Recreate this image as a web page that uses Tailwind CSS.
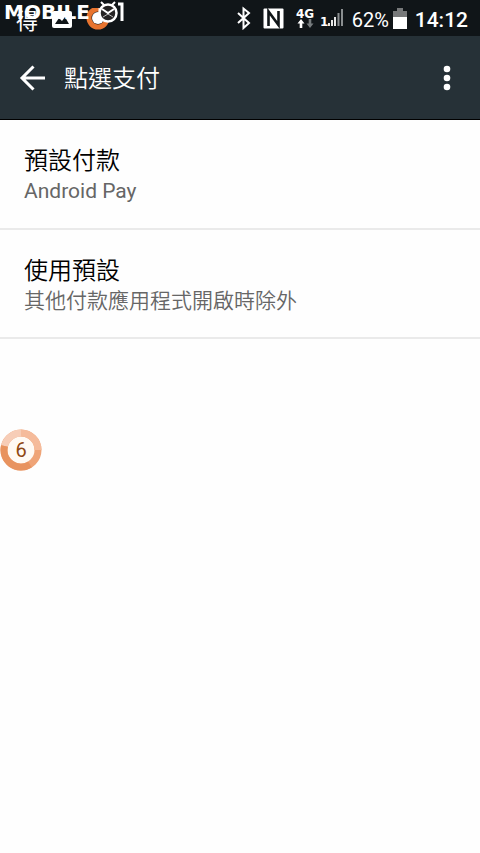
<!DOCTYPE html>
<html lang="zh-Hant">
<head>
<meta charset="utf-8">
<meta name="viewport" content="width=device-width, initial-scale=1">
<title>點選支付</title>
<script src="https://cdn.jsdelivr.net/npm/@tailwindcss/browser@4"></script>
</head>
<body class="relative min-h-screen bg-[#fefefe] font-[Roboto,'Noto_Sans_CJK_TC',sans-serif]">
<div class="relative flex h-9 items-center justify-between bg-[#101518] pr-3 pl-4 text-white">
  <div class="flex items-center gap-3.5 pt-1">
    <span class="pt-1 text-[22px] leading-6">得</span>
    <svg class="h-5 w-5" viewBox="0 0 20 20" aria-hidden="true"><rect y="1" width="20" height="17" rx="2" fill="#fff"/><path d="M3 14l4-6 3 3 3-4 4 7z" fill="#101518"/></svg>
    <svg class="h-6 w-6" viewBox="0 0 24 24" aria-hidden="true"><circle cx="12" cy="10" r="9" fill="none" stroke="#e8742f" stroke-width="5"/><path d="M12 1a9 9 0 0 1 9 9" fill="none" stroke="#f2b08c" stroke-width="5"/><circle cx="12" cy="10" r="6" fill="#fff"/></svg>
  </div>
  <div class="flex items-center">
    <svg class="h-6 w-[110px] shrink-0" viewBox="233 7 110 24" aria-hidden="true">
      <path d="M237 14l11 10-5.500 5V9.500l5.500 4.500-11 10" fill="none" stroke="#fff" stroke-width="2"/>
      <rect x="262.500" y="9.500" width="20" height="20" rx="1" fill="#fff"/>
      <path d="M267.500 27V12.500L277.500 26V12" fill="none" stroke="#101518" stroke-width="2.600"/>
      <text x="295" y="19" font-family="DejaVu Sans" font-size="12" font-weight="700" fill="#fff">4G</text>
      <path d="M300 20l3.500 4.500h-2.200V29h-2.600v-4.500h-2.200z" fill="#fff"/>
      <path d="M309 29l-3.500-4.500h2.200V20h2.600v4.500h2.200z" fill="#777c7e"/>
      <text x="319" y="27" font-family="DejaVu Sans" font-size="12" font-weight="700" fill="#fff">1</text>
      <path d="M328 27v-3M331 27v-6M334 27v-9" stroke="#e8e8e8" stroke-width="2"/>
      <path d="M337.500 27V14M341 27V10" stroke="#8a8e90" stroke-width="2"/>
    </svg>
    <span class="w-[49px] pt-1 pl-2 text-xl leading-6">62%</span>
    <svg class="h-6 w-3.5 shrink-0" viewBox="0 0 14 24" aria-hidden="true"><path d="M4 2h6v3h4v7H0V5h4z" fill="#77797a"/><path d="M0 11h14v12H0z" fill="#fff"/></svg>
    <span class="pt-1 pl-2 text-[21px] leading-6 font-medium">14:12</span>
  </div>
  <div class="absolute top-0 left-1 flex items-center text-white" aria-label="Mobile01">
    <span class="w-[94px] font-['DejaVu_Sans',sans-serif] text-xl leading-6 font-bold">MOBILE</span>
    <svg class="h-6 w-5" viewBox="0 0 20 24" aria-hidden="true"><path d="M3 2l3 3M17 2l-3 3" stroke="#fff" stroke-width="2"/><circle cx="10" cy="13" r="8.500" fill="#242323" stroke="#fff" stroke-width="2.500"/><path d="M4 9l6 4 6-4M10 13v1" fill="none" stroke="#fff" stroke-width="2"/><path d="M5 17l5-3 5 3" fill="none" stroke="#bbb" stroke-width="1"/></svg>
    <svg class="h-6 w-1.5" viewBox="0 0 6 24" aria-hidden="true"><path d="M0 4h4v17" fill="none" stroke="#fff" stroke-width="3"/></svg>
  </div>
</div>
<header class="flex h-[84px] items-center border-b border-black bg-[#263137] px-4 text-white">
  <button type="button" aria-label="返回" class="h-8 w-8"><svg class="h-8 w-8" viewBox="0 0 32 32" aria-hidden="true"><path d="M29 16H6M17.500 4.500L6 16l11.500 11.500" fill="none" stroke="#fff" stroke-width="3"/></svg></button>
  <h1 class="ml-4 flex-1 pt-0.5 text-2xl leading-8 font-[350]">點選支付</h1>
  <button type="button" aria-label="更多選項" class="h-8 w-9"><svg class="h-8 w-9" viewBox="0 0 36 32" aria-hidden="true"><circle cx="19" cy="7" r="3.300" fill="#fff"/><circle cx="19" cy="16" r="3.300" fill="#fff"/><circle cx="19" cy="25" r="3.300" fill="#fff"/></svg></button>
</header>
<main>
  <button type="button" class="block h-[110px] w-full border-b-2 border-[#eaeaea] px-6 pt-0.5 text-left">
    <span class="block text-2xl leading-8 font-[350] text-black">預設付款</span>
    <span class="block text-[21px] leading-7 text-[#666]">Android Pay</span>
  </button>
  <button type="button" class="block h-[109px] w-full border-b-2 border-[#eaeaea] px-6 pt-0.5 text-left">
    <span class="block text-2xl leading-8 font-[350] text-black">使用預設</span>
    <span class="block text-[21px] leading-7 font-[350] text-[#666]">其他付款應用程式開啟時除外</span>
  </button>
</main>
<button type="button" class="absolute top-[429px] left-0 grid h-[42px] w-[42px] place-items-center" aria-label="6">
  <svg class="col-start-1 row-start-1 h-[42px] w-[42px]" viewBox="0 0 42 42" aria-hidden="true"><circle cx="21" cy="21" r="17" fill="#fffaf4" stroke="#efa477" stroke-width="7"/><path d="M4.500 17A17 17 0 0 1 21 4" fill="none" stroke="#f7cdb7" stroke-width="7"/><path d="M21 4A17 17 0 0 1 38 21" fill="none" stroke="#f5bb9b" stroke-width="7"/><path d="M4.500 17A17 17 0 0 0 30 35.500" fill="none" stroke="#e8935f" stroke-width="7"/></svg>
  <span class="col-start-1 row-start-1 text-xl leading-6 text-[#8f4812]">6</span>
</button>
</body>
</html>
